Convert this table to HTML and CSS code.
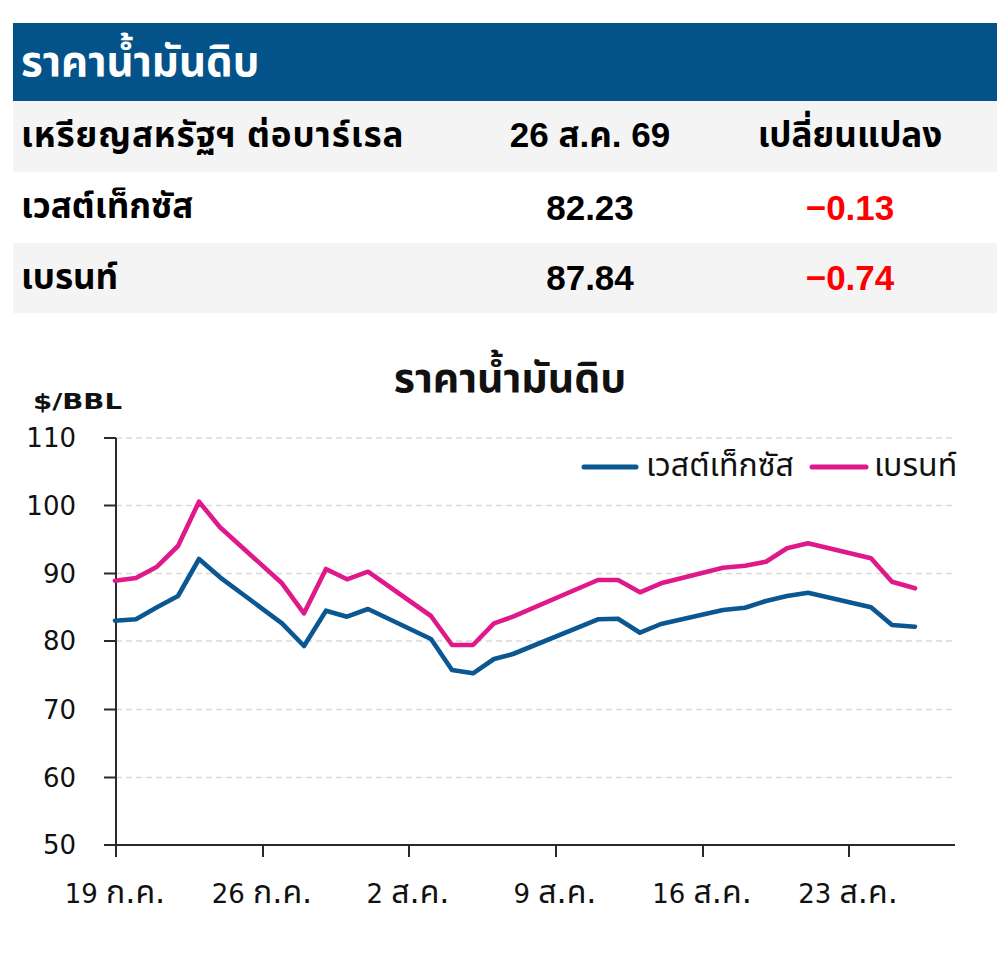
FILE: index.html
```html
<!DOCTYPE html>
<html lang="th">
<head>
<meta charset="utf-8">
<title>ราคาน้ำมันดิบ</title>
<link rel="stylesheet" href="styles.css">
</head>
<body>
<main class="page">
  <section class="price-table">
    <div class="title-bar">ราคาน้ำมันดิบ</div>
    <div class="row row-alt">
      <div class="cell cell-name cell-unit">เหรียญสหรัฐฯ ต่อบาร์เรล</div>
      <div class="cell cell-num">26 ส.ค. 69</div>
      <div class="cell cell-num">เปลี่ยนแปลง</div>
    </div>
    <div class="row">
      <div class="cell cell-name">เวสต์เท็กซัส</div>
      <div class="cell cell-num">82.23</div>
      <div class="cell cell-num neg">−0.13</div>
    </div>
    <div class="row row-alt">
      <div class="cell cell-name">เบรนท์</div>
      <div class="cell cell-num">87.84</div>
      <div class="cell cell-num neg">−0.74</div>
    </div>
  </section>

  <svg class="chart" width="997" height="650" viewBox="0 313 997 650" xmlns="http://www.w3.org/2000/svg">
    <text class="chart-title" x="510" y="392" text-anchor="middle">ราคาน้ำมันดิบ</text>
    <text class="unit" x="33" y="409" textLength="89" lengthAdjust="spacingAndGlyphs">$/BBL</text>

    <g class="grid">
      <line x1="116" y1="438" x2="955" y2="438"/>
      <line x1="116" y1="505.5" x2="955" y2="505.5"/>
      <line x1="116" y1="573.5" x2="955" y2="573.5"/>
      <line x1="116" y1="641" x2="955" y2="641"/>
      <line x1="116" y1="709.5" x2="955" y2="709.5"/>
      <line x1="116" y1="777.5" x2="955" y2="777.5"/>
    </g>

    <g class="axis">
      <line x1="116" y1="438" x2="116" y2="857"/>
      <line x1="104" y1="845" x2="955" y2="845"/>
      <line x1="104" y1="438" x2="116" y2="438"/>
      <line x1="104" y1="505.5" x2="116" y2="505.5"/>
      <line x1="104" y1="573.5" x2="116" y2="573.5"/>
      <line x1="104" y1="641" x2="116" y2="641"/>
      <line x1="104" y1="709.5" x2="116" y2="709.5"/>
      <line x1="104" y1="777.5" x2="116" y2="777.5"/>
      <line x1="263" y1="845" x2="263" y2="857"/>
      <line x1="409" y1="845" x2="409" y2="857"/>
      <line x1="556" y1="845" x2="556" y2="857"/>
      <line x1="703" y1="845" x2="703" y2="857"/>
      <line x1="849" y1="845" x2="849" y2="857"/>
    </g>

    <g class="ylabels" text-anchor="end">
      <text x="76" y="447">110</text>
      <text x="76" y="514.5">100</text>
      <text x="76" y="582.5">90</text>
      <text x="76" y="650">80</text>
      <text x="76" y="718.5">70</text>
      <text x="76" y="786.5">60</text>
      <text x="76" y="854">50</text>
    </g>

    <g class="xlabels" text-anchor="middle">
      <text x="115" y="903">19 <tspan class="th">ก.ค.</tspan></text>
      <text x="262" y="903">26 <tspan class="th">ก.ค.</tspan></text>
      <text x="408" y="903">2 <tspan class="th">ส.ค.</tspan></text>
      <text x="555" y="903">9 <tspan class="th">ส.ค.</tspan></text>
      <text x="702" y="903">16 <tspan class="th">ส.ค.</tspan></text>
      <text x="848" y="903">23 <tspan class="th">ส.ค.</tspan></text>
    </g>

    <polyline class="series brent" points="115,580.7 136,578 157,566.7 178,546 199,501.7 220,527.3 282,583.3 304,613.3 326,569 347,579.3 368,571.7 431,616 452,645 473,645 494,623.3 513,616.7 598,580 618,580 640,592.3 661,583.3 723,567.7 745,565.7 766,561.7 787,548.3 808,543.3 871,558.3 892,581.7 915,588.3"/>
    <polyline class="series wti" points="115,620.7 136,619.3 157,607.3 178,596 199,559 220,577.3 282,623.3 304,646 326,610.7 347,616.7 368,609 431,639 452,670 473,673.3 494,659 513,654 598,619.3 618,618.7 640,632.7 661,624 723,610 745,607.7 766,601 787,596 808,592.7 871,607.3 892,625 915,626.7"/>

    <g class="legend">
      <line class="legend-wti" x1="584" y1="467" x2="636" y2="467"/>
      <text x="646" y="476">เวสต์เท็กซัส</text>
      <line class="legend-brent" x1="812" y1="467" x2="866" y2="467"/>
      <text x="874" y="476">เบรนท์</text>
    </g>
  </svg>
</main>
</body>
</html>
```

FILE: styles.css
```css
html, body {
  margin: 0;
  padding: 0;
  background: #ffffff;
}

body {
  font-family: "Liberation Sans", "Noto Sans Thai", "Noto Sans Thai Looped", "Noto Sans", "DejaVu Sans", sans-serif;
  color: #000000;
  width: 997px;
}

.page {
  padding-top: 23px;
}

.price-table {
  margin-left: 13px;
  width: 984px;
}

.title-bar {
  height: 78px;
  background: #03528a;
  color: #ffffff;
  font-weight: 700;
  font-size: 42px;
  line-height: 78px;
  padding-left: 8px;
  box-sizing: border-box;
}

.row {
  display: grid;
  grid-template-columns: 447px 260px 260px 1fr;
  height: 71px;
  align-items: center;
  background: #ffffff;
}

.row:last-child {
  height: 70px;
}

.row-alt {
  background: #f4f4f4;
}

.cell {
  font-weight: 700;
  font-size: 35px;
  white-space: nowrap;
}

.cell-name {
  padding-left: 8px;
}

.cell-unit {
  letter-spacing: 0.9px;
}

.cell-num {
  text-align: center;
}

.neg {
  color: #ff0000;
}

.chart {
  display: block;
}

.chart text {
  font-family: "DejaVu Sans", "Noto Sans Thai", "Noto Sans", sans-serif;
  fill: #111111;
}

.chart .chart-title {
  font-size: 41px;
  font-weight: 700;
}

.chart .unit {
  font-size: 22px;
  font-weight: 700;
}

.ylabels text,
.xlabels text {
  font-size: 26px;
}

.xlabels .th {
  font-size: 32px;
}

.legend text {
  font-size: 32px;
}

.grid line {
  stroke: #d9d9d9;
  stroke-width: 1.6;
  stroke-dasharray: 6 4;
}

.axis line {
  stroke: #2a2a2a;
  stroke-width: 2;
}

.series {
  fill: none;
  stroke-width: 4.6;
  stroke-linejoin: round;
  stroke-linecap: round;
}

.wti {
  stroke: #0b5791;
}

.brent {
  stroke: #e0198b;
}

.legend line {
  stroke-width: 5;
  stroke-linecap: round;
}

.legend-wti {
  stroke: #0b5791;
}

.legend-brent {
  stroke: #e0198b;
}
```
